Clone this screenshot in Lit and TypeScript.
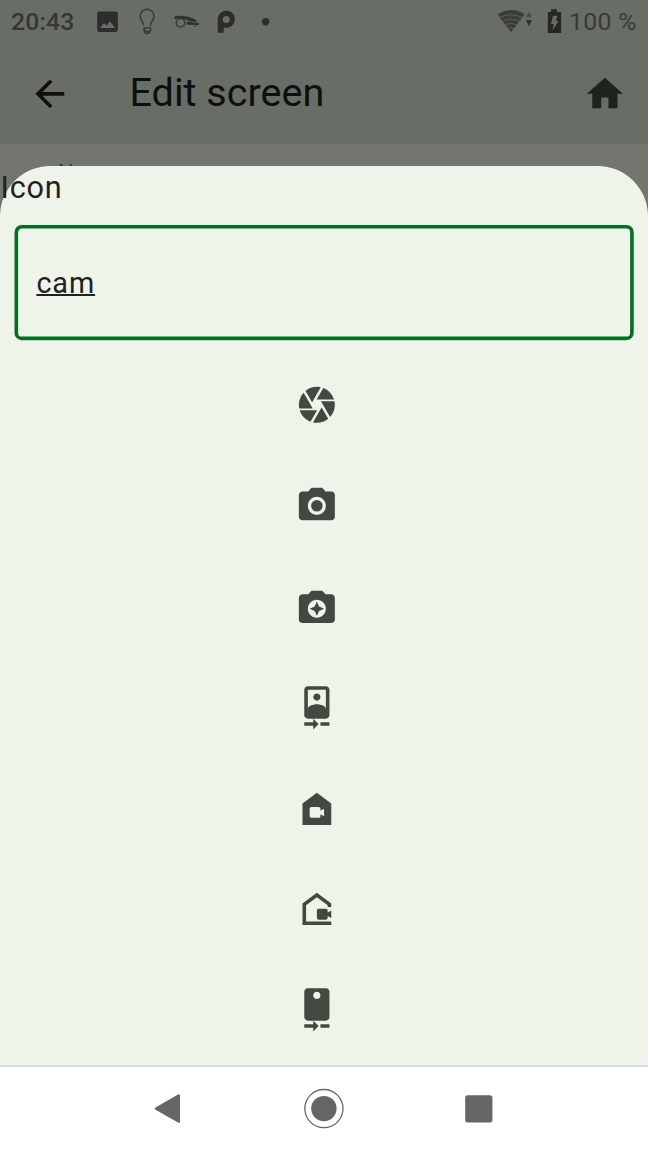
import { LitElement, html, css, svg } from "lit";
import { customElement, property } from "lit/decorators.js";

const GLYPHS: Record<string, string> = {
  camera:
    "M9.4 10.5l4.77-8.26C13.47 2.09 12.75 2 12 2c-2.4 0-4.6.85-6.32 2.25l3.66 6.35.06-.1zM21.54 9c-.92-2.92-3.15-5.26-6-6.34L11.88 9h9.66zm.26 1h-7.49l.29.5 4.76 8.25C21 16.97 22 14.61 22 12c0-.69-.07-1.35-.2-2zM8.54 12l-3.9-6.75C3.01 7.03 2 9.39 2 12c0 .69.07 1.35.2 2h7.49l-1.15-2zm-6.08 3c.92 2.92 3.15 5.26 6 6.34L12.12 15H2.46zm11.27 0l-3.9 6.76c.7.15 1.42.24 2.17.24 2.4 0 4.6-.85 6.32-2.25l-3.66-6.35-.93 1.6z",
  cameraAlt:
    "M12 8.8a3.2 3.2 0 1 0 0 6.4 3.2 3.2 0 0 0 0-6.4zM9 2L7.17 4H4c-1.1 0-2 .9-2 2v12c0 1.1.9 2 2 2h16c1.1 0 2-.9 2-2V6c0-1.1-.9-2-2-2h-3.17L15 2H9zm3 15c-2.76 0-5-2.24-5-5s2.24-5 5-5 5 2.24 5 5-2.24 5-5 5z",
  cameraEnhance:
    "M9 3L7.17 5H4c-1.1 0-2 .9-2 2v12c0 1.1.9 2 2 2h16c1.1 0 2-.9 2-2V7c0-1.1-.9-2-2-2h-3.17L15 3H9zm3 15c-2.76 0-5-2.24-5-5s2.24-5 5-5 5 2.24 5 5-2.24 5-5 5zM12 17l1.25-2.75L16 13l-2.75-1.25L12 9l-1.25 2.75L8 13l2.75 1.25z",
  cameraFront:
    "M10 20H5v2h5v2l3-3-3-3v2zm4 0v2h5v-2h-5zM12 8c1.1 0 2-.9 2-2s-.9-2-2-2-1.99.9-1.99 2S10.9 8 12 8zm5-8H7C5.9 0 5 .9 5 2v14c0 1.1.9 2 2 2h10c1.1 0 2-.9 2-2V2c0-1.1-.9-2-2-2zM7 2h10v10.5c0-1.67-3.33-2.5-5-2.5s-5 .83-5 2.5V2z",
  cameraIndoor:
    "M12 3L4 9v12h16V9L12 3zM16 16.06L14 15v1c0 .55-.45 1-1 1H9c-.55 0-1-.45-1-1v-4c0-.55.45-1 1-1h4c.55 0 1 .45 1 1v1l2-1.06V16.06z",
  cameraOutdoor:
    "M18 19H6v-9l6-4.5 6 4.5v1h2V9l-8-6-8 6v12h16v-2zM18 14v-1c0-.55-.45-1-1-1h-4c-.55 0-1 .45-1 1v4c0 .55.45 1 1 1h4c.55 0 1-.45 1-1v-1l2 1.06v-4.12L18 14z",
  cameraRear:
    "M10 20H5v2h5v2l3-3-3-3v2zm4 0v2h5v-2h-5zm3-20H7C5.9 0 5 .9 5 2v14c0 1.1.9 2 2 2h10c1.1 0 2-.9 2-2V2c0-1.1-.9-2-2-2zm-5 6c-1.11 0-2-.9-2-2s.89-2 1.99-2 2 .9 2 2C14 5.1 13.1 6 12 6z",
  home: "M10 20v-6h4v6h5v-8h3L12 3 2 12h3v8z",
  back: "M20 11H7.83l5.59-5.59L12 4l-8 8 8 8 1.41-1.41L7.83 13H20v-2z",
};

@customElement("md-icon")
export class MdIcon extends LitElement {
  @property() name = "";
  static styles = css`
    :host {
      display: block;
      width: 43.2px;
      height: 43.2px;
      flex: none;
    }
    .glyph {
      display: block;
      width: 100%;
      height: 100%;
      overflow: visible;
      fill: currentColor;
    }
  `;
  render() {
    return html`<svg class="glyph" viewBox="0 0 24 24">
      ${svg`<path transform="translate(0.15 0.15)" fill-rule="evenodd" d=${GLYPHS[this.name] ?? ""} />`}
    </svg>`;
  }
}

@customElement("status-bar")
export class StatusBar extends LitElement {
  static styles = css`
    :host {
      display: flex;
      align-items: center;
      justify-content: space-between;
      height: 43px;
      padding: 0 11px;
      box-sizing: border-box;
      font-size: 24.8px;
      line-height: 43px;
      color: #383b37;
    }
    .side {
      display: flex;
      align-items: center;
    }
    .time {
      width: 79px;
      font-weight: 500;
      letter-spacing: 0.1px;
      color: #343733;
    }
    .notifications,
    .signals {
      display: block;
    }
    .level {
      width: 68px;
      margin-left: 4px;
      letter-spacing: 0.3px;
      white-space: nowrap;
    }
  `;
  render() {
    return html`
      <div class="side">
        <span class="time">20:43</span>
        <svg class="notifications" width="190" height="43" viewBox="90 0 190 43">
          <path fill="#2b2e2a" fill-rule="evenodd"
            d="M99.2 11.5h16.6q2 0 2 2v16.500q0 2-2 2H99.200q-2 0-2-2V13.500q0-2 2-2zM100 28h15l-5-6.700-3.500 4.400-2.500-2.700z" />
          <g fill="none" stroke="#373a36" stroke-width="1.5">
            <path d="M143.500 25.200c-.2-3.500-3.300-5.200-3.300-9a6.900 6.900 0 0 1 13.800 0c0 3.800-3.300 5.500-3.600 9.200" />
            <path d="M144.200 27.800c2 .5 4 .2 6.200-.4v3.200c-1.500 1-4.500 1-6.200.2zM144.300 31c.3 3.500 5.500 3.500 6-.3" />
            <circle cx="180.500" cy="22.800" r="4.200" />
          </g>
          <path fill="#2e312d"
            d="M174.300 17.200c1-1.800 6-1.800 12-.7 5 .8 9.500 3 11.500 5.200l-8-.3c-4-2.600-10-3.700-15.500-2.400zM186.500 21.800l12.500 1.300-.3 2.200-12.200-.8zM193 26h3.500l-1.500 1z" />
          <path fill="#2b2e2a" fill-rule="evenodd"
            d="M217.700 32.800V19.200a8.600 8.600 0 1 1 8.600 8.600h-2.600v4.200q0 .8-.8.8zM226.200 15.900a3.500 3.500 0 1 0 0 7 3.500 3.500 0 0 0 0-7z" />
          <circle cx="265.700" cy="21.700" r="3.700" fill="#2b2e2a" />
        </svg>
      </div>
      <div class="side">
        <svg class="signals" width="70" height="43" viewBox="495 0 70 43">
          <path fill="#3a3d39" d="M497.300 14.200Q511 5.800 524.700 14.200L511 32.300z" />
          <g fill="none" stroke="#5c615a" stroke-width="1">
            <path d="M499.500 17.500q11.500-5.500 23 0M502.500 21.500q8.500-4.500 17 0M505 25.200q6-3.200 12 0M507.500 28.700q3.500-2 7 0" />
          </g>
          <path fill="#4b504a" d="M526 17.200l3-5.800 3 5.800z" />
          <path fill="#2e312d" d="M526 20h6l-3 6.200z" />
          <path fill="#252824" d="M551 9.300h6V12h2.800q1.300 0 1.300 1.300V33h-13.300V13.300q0-1.300 1.300-1.300h1.900z" />
          <path fill="#686d66" d="M553 15.700h4.500l-1.500 5.300h2.500l-6 9.500 1.200-6.500h-2.700z" />
        </svg>
        <span class="level">100 %</span>
      </div>
    `;
  }
}

@customElement("icon-picker-sheet")
export class IconPickerSheet extends LitElement {
  @property() query = "cam";
  private results = [
    "camera",
    "cameraAlt",
    "cameraEnhance",
    "cameraFront",
    "cameraIndoor",
    "cameraOutdoor",
    "cameraRear",
  ];
  static styles = css`
    :host {
      display: flex;
      flex-direction: column;
      background: #eef4ea;
      border-radius: 50.4px 50.4px 0 0;
      color: #1f211e;
      font-size: 28.8px;
      letter-spacing: 0.9px;
    }
    .label {
      height: 59.5px;
      padding-left: 0.6px;
      font-size: 30.6px;
      line-height: 43.2px;
      letter-spacing: 0.8px;
    }
    .field {
      display: grid;
      align-items: center;
      height: 115.2px;
      margin: 0 14.4px;
    }
    .outline,
    .value {
      grid-area: 1 / 1;
    }
    .outline {
      display: block;
      width: 100%;
      height: 100%;
      overflow: visible;
    }
    .value {
      justify-self: start;
      margin-left: 22px;
      line-height: 34px;
      text-decoration: underline;
      text-decoration-thickness: 1.5px;
      text-underline-offset: 1px;
      text-decoration-skip-ink: none;
    }
    .results {
      display: flex;
      flex-direction: column;
      align-items: center;
      gap: 57.6px;
      margin-top: 43.2px;
      padding-right: 14px;
      color: #424940;
    }
  `;
  render() {
    return html`
      <div class="label">Icon</div>
      <div class="field">
        <svg class="outline" viewBox="0 0 619.2 115.2">
          <rect x="2.3" y="1.8" width="615.6" height="111.6" rx="5.4" fill="none" stroke="#007020" stroke-width="3.6" />
        </svg>
        <span class="value">${this.query}</span>
      </div>
      <div class="results">
        ${this.results.map((name) => html`<md-icon name=${name}></md-icon>`)}
      </div>
    `;
  }
}

@customElement("app-root")
export class AppRoot extends LitElement {
  static styles = css`
    :host {
      display: flex;
      flex-direction: column;
      position: relative;
      width: 648px;
      height: 1152px;
      overflow: hidden;
      background: #757570;
      font-family: Roboto, sans-serif;
    }
    .header {
      height: 144px;
      background: #686d66;
    }
    .toolbar {
      display: flex;
      align-items: center;
      height: 101px;
      padding: 0 21.6px 0 28px;
      color: #0e100d;
    }
    .title {
      flex: 1;
      margin-left: 58.3px;
      padding-bottom: 2px;
      font-size: 39.6px;
      line-height: 50px;
    }
    .home {
      color: #1f231e;
    }
    .content {
      flex: 1;
      padding: 16px 58px;
      font-size: 21.6px;
      line-height: 26px;
      color: #333530;
    }
    .sheet {
      position: absolute;
      top: 165.5px;
      left: 0;
      right: 0;
      bottom: 86px;
    }
    .nav {
      position: relative;
      height: 87px;
      box-sizing: border-box;
      border-top: 2px solid #d9dbd8;
      background: #fff;
    }
    .keys {
      display: block;
    }
  `;
  render() {
    return html`
      <div class="header">
        <status-bar></status-bar>
        <div class="toolbar">
          <md-icon name="back"></md-icon>
          <span class="title">Edit screen</span>
          <md-icon class="home" name="home"></md-icon>
        </div>
      </div>
      <div class="content">Name</div>
      <icon-picker-sheet class="sheet"></icon-picker-sheet>
      <div class="nav">
        <svg class="keys" width="648" height="85" viewBox="0 1067 648 85">
          <g fill="#666">
            <path d="M155.500 1107.400L178 1094.600q2-1 2 1v26q0 2-2 1L155.500 1109.800q-1.500-1.200 0-2.400z" />
            <circle cx="323.900" cy="1108.600" r="12.700" />
            <circle cx="323.900" cy="1108.600" r="19.100" fill="none" stroke="#666" stroke-width="1.300" />
            <rect x="465.200" y="1095.200" width="27.200" height="27.200" rx="2.500" />
          </g>
        </svg>
      </div>
    `;
  }
}
